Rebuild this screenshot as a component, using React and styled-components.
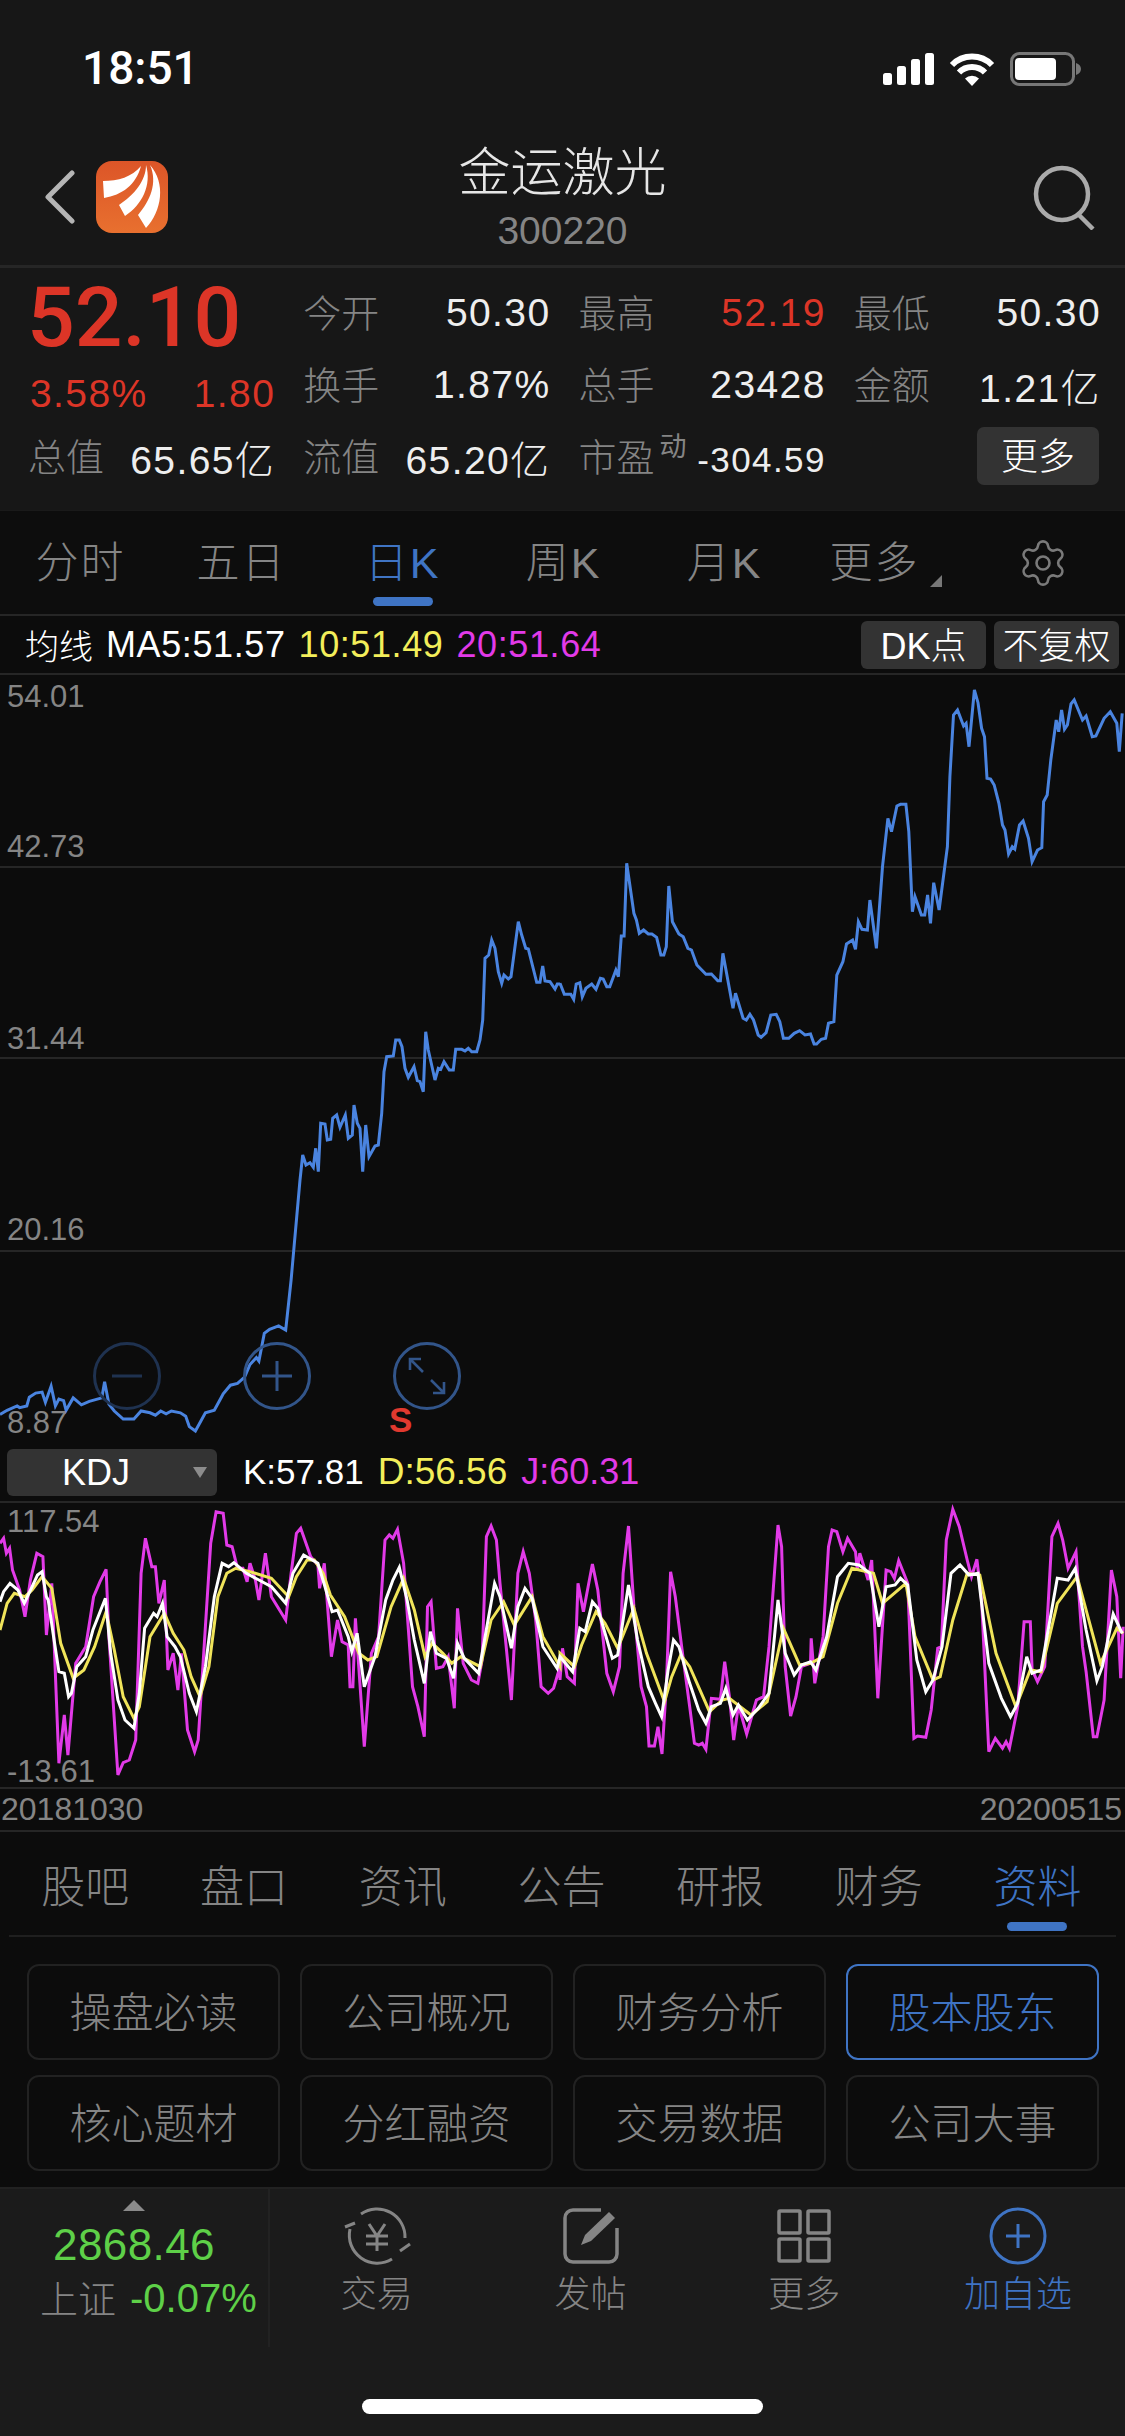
import React from 'react';
import styled, { createGlobalStyle } from 'styled-components';
import { Settings } from 'lucide-react';

const GlobalStyle = createGlobalStyle`
  html, body { margin: 0; padding: 0; background: #0c0c0c; }
  * { box-sizing: border-box; }
`;

const SANS = `"Liberation Sans", "Noto Sans CJK SC", sans-serif`;
const BLUE = '#3f74c4';
const RED = '#dc3527';
const GREY = '#858585';
const LINE = '#262626';

const Page = styled.div`
  width: 1125px;
  height: 2436px;
  overflow: hidden;
  background: #0c0c0c;
  font-family: ${SANS};
  color: #eee;
`;

/* ---- header ---- */
const Header = styled.header`
  height: 268px;
  background: #171717;
  border-bottom: 3px solid ${LINE};
`;
const StatusBar = styled.div`
  height: 138px;
  padding: 0 43px 0 82px;
  display: flex;
  align-items: center;
  justify-content: space-between;
`;
const Clock = styled.div`
  font-family: Roboto, sans-serif;
  font-weight: 500;
  font-size: 46px;
  margin-top: -2px;
  color: #fff;
`;
const StatusIcons = styled.div`
  display: flex;
  align-items: center;
  gap: 15px;
`;
const Nav = styled.div`
  display: grid;
  grid-template-columns: 1fr auto 1fr;
`;
const NavLeft = styled.div`
  height: 72px;
  margin-top: 23px;
  padding-left: 45px;
  display: flex;
  align-items: center;
  gap: 21px;
`;
const NavRight = styled.div`
  height: 72px;
  margin-top: 23px;
  padding-right: 27px;
  display: flex;
  align-items: center;
  justify-content: flex-end;
`;
const TitleBlock = styled.div`
  text-align: center;
`;
const Title = styled.div`
  font-size: 52px;
  line-height: 70px;
  font-weight: 300;
  color: #e6e6e6;
`;
const Code = styled.div`
  font-size: 39px;
  line-height: 46px;
  color: ${GREY};
`;

/* ---- quote ---- */
const Quote = styled.section`
  height: 242px;
  background: #171717;
  padding: 9px 24px 0 30px;
  display: grid;
  grid-template-columns: repeat(4, 1fr);
  grid-auto-rows: 72px;
  column-gap: 30px;
`;
const Price = styled.div`
  font-family: Roboto, sans-serif;
  font-weight: 500;
  font-size: 84px;
  line-height: 72px;
  padding-top: 5px;
  margin-left: -3px;
  color: ${RED};
  white-space: nowrap;
`;
const Stat = styled.div`
  display: flex;
  align-items: center;
  justify-content: space-between;
  white-space: nowrap;
  padding-top: ${(p) => p.$drop || 0}px;
`;
const StatLabel = styled.span`
  font-size: 38px;
  margin: -6px 0 0 -2px;
  font-weight: 300;
  color: ${GREY};
`;
const StatValue = styled.span`
  font-size: ${(p) => p.$size || 39}px;
  font-weight: 300;
  letter-spacing: 1.4px;
  padding-top: ${(p) => p.$drop || 0}px;
  color: ${(p) => p.$color || '#eee'};
`;
const Sup = styled.span`
  font-size: 27px;
  color: ${GREY};
  margin-left: 5px;
  align-self: flex-start;
  margin-top: -8px;
`;
const LabelGroup = styled.span`
  display: flex;
  align-items: center;
`;
const MoreButton = styled.button`
  justify-self: end;
  align-self: center;
  width: 122px;
  height: 58px;
  margin: -2px 2px 0 0;
  border: 0;
  border-radius: 7px;
  background: #333;
  color: #fff;
  font-family: inherit;
  font-size: 37px;
  font-weight: 300;
  padding: 0 0 5px;
`;

/* ---- period tabs ---- */
const PeriodBar = styled.nav`
  height: 104px;
  background: #0d0d0d;
  border-top: 1px solid #1a1a1a;
  display: grid;
  grid-template-columns: repeat(6, 161px) 1fr;
`;
const PeriodTab = styled.div`
  position: relative;
  display: flex;
  align-items: center;
  justify-content: center;
  padding-bottom: 8px;
  font-size: 43px;
  font-weight: 300;
  letter-spacing: 2px;
  color: ${(p) => (p.$active ? BLUE : GREY)};
  &::after {
    content: '';
    display: ${(p) => (p.$active ? 'block' : 'none')};
    position: absolute;
    left: 50%;
    bottom: 8px;
    width: 60px;
    height: 9px;
    margin-left: -30px;
    border-radius: 5px;
    background: ${BLUE};
  }
`;
const Corner = styled.span`
  align-self: flex-end;
  margin: 0 0 19px 10px;
  width: 0;
  height: 0;
  border-left: 12px solid transparent;
  border-bottom: 12px solid #777;
`;
const GearCell = styled.div`
  display: flex;
  align-items: center;
  padding-left: 51px;
  color: #7a7a7a;
`;

/* ---- indicator rows ---- */
const LegendRow = styled.div`
  height: 61px;
  border-top: 2px solid ${LINE};
  border-bottom: 2px solid ${LINE};
  padding: 0 6px 0 25px;
  display: flex;
  align-items: center;
  gap: 13px;
  white-space: nowrap;
`;
const LegendText = styled.span`
  font-size: ${(p) => p.$size || 36}px;
  letter-spacing: ${(p) => (p.$tight ? 0 : 0.6)}px;
  font-weight: 300;
  color: ${(p) => p.$color || '#fff'};
`;
const LegendButtons = styled.div`
  margin-left: auto;
  display: flex;
  gap: 8px;
`;
const LegendButton = styled.div`
  width: 125px;
  height: 48px;
  padding-bottom: 3px;
  border-radius: 6px;
  background: #333;
  display: flex;
  align-items: center;
  justify-content: center;
  font-size: 36px;
  font-weight: 300;
  color: #fff;
`;

/* ---- charts ---- */
const ChartBox = styled.div`
  position: relative;
  height: ${(p) => p.$height}px;
  svg.plot {
    display: block;
    width: 1125px;
    height: ${(p) => p.$height}px;
  }
`;
const AxisLabel = styled.span`
  position: absolute;
  left: 7px;
  top: ${(p) => p.$top}px;
  font-size: 31px;
  line-height: 34px;
  color: ${GREY};
`;
const ZoomControls = styled.div`
  position: absolute;
  left: 93px;
  top: 667px;
  display: flex;
  gap: 82px;
`;
const ZoomButton = styled.div`
  width: 68px;
  height: 68px;
  border-radius: 50%;
  border: 3px solid ${(p) => (p.$dim ? '#1f3250' : '#32558a')};
  display: flex;
  align-items: center;
  justify-content: center;
`;
const SellMark = styled.span`
  position: absolute;
  left: 389px;
  top: 726px;
  font-weight: 700;
  font-size: 35px;
  line-height: 38px;
  color: #e0392f;
`;
const KdjRow = styled(LegendRow)`
  height: 60px;
  border-top: 0;
  padding: 0 0 0 7px;
  gap: 14px;
`;
const KdjSelect = styled.div`
  position: relative;
  width: 210px;
  height: 47px;
  margin-right: 12px;
  border-radius: 6px;
  background: #333;
  padding-left: 55px;
  font-size: 36px;
  line-height: 47px;
  color: #fff;
  &::after {
    content: '';
    position: absolute;
    right: 10px;
    top: 18px;
    border-left: 7px solid transparent;
    border-right: 7px solid transparent;
    border-top: 11px solid #8c8c8c;
  }
`;
const DateRow = styled.div`
  height: 45px;
  padding: 0 3px 0 1px;
  border-top: 2px solid ${LINE};
  border-bottom: 2px solid ${LINE};
  display: flex;
  align-items: center;
  justify-content: space-between;
  font-size: 32px;
  color: ${GREY};
`;

/* ---- section tabs + cards ---- */
const SectionBar = styled.nav`
  height: 105px;
  margin: 0 9px;
  border-bottom: 2px solid #1f1f1f;
`;
const SectionTabs = styled.div`
  height: 100%;
  margin: 0 0 0 -3px;
  display: grid;
  grid-template-columns: repeat(7, 158.7px);
`;
const SectionTab = styled(PeriodTab)`
  padding-bottom: 0;
  font-size: 44px;
  letter-spacing: 0;
  &::after {
    bottom: 4px;
  }
`;
const Cards = styled.div`
  padding: 27px 27px 0;
  display: grid;
  grid-template-columns: repeat(4, 253px);
  grid-auto-rows: 96px;
  column-gap: 20px;
  row-gap: 15px;
`;
const Card = styled.div`
  border: 2px solid ${(p) => (p.$active ? BLUE : '#222')};
  border-radius: 12px;
  padding-bottom: 5px;
  display: flex;
  align-items: center;
  justify-content: center;
  font-size: 42px;
  font-weight: 300;
  color: ${(p) => (p.$active ? BLUE : GREY)};
`;

/* ---- footer ---- */
const Footer = styled.footer`
  margin-top: 16px;
  height: 249px;
  background: #1b1b1b;
  border-top: 2px solid #222;
`;
const FooterMain = styled.div`
  height: 158px;
  display: flex;
`;
const Market = styled.div`
  width: 270px;
  padding-top: 11px;
  border-right: 2px solid #222;
  display: flex;
  flex-direction: column;
  align-items: center;
`;
const MarketArrow = styled.span`
  border-left: 11px solid transparent;
  border-right: 11px solid transparent;
  border-bottom: 11px solid #8a8a8a;
  margin-bottom: 9px;
`;
const MarketValue = styled.div`
  font-size: 44px;
  line-height: 50px;
  color: #5ed048;
  letter-spacing: 0.4px;
`;
const MarketLine = styled.div`
  align-self: flex-start;
  display: flex;
  align-items: center;
  gap: 14px;
  height: 50px;
  margin: 3px 0 0 40px;
  white-space: nowrap;
`;
const MarketName = styled.span`
  font-size: 38px;
  margin-top: -3px;
  font-weight: 300;
  color: ${GREY};
`;
const MarketChange = styled.span`
  font-size: 40px;
  color: #5ed048;
`;
const Actions = styled.div`
  flex: 1;
  display: grid;
  grid-template-columns: repeat(4, 1fr);
`;
const Action = styled.div`
  padding-top: 14px;
  display: flex;
  flex-direction: column;
  align-items: center;
  color: ${(p) => (p.$active ? BLUE : GREY)};
`;
const ActionIcon = styled.div`
  height: 66px;
  display: flex;
  align-items: center;
  justify-content: center;
`;
const ActionLabel = styled.div`
  font-size: 36px;
  line-height: 50px;
  font-weight: 300;
  margin-top: 1px;
`;
const HomeBar = styled.div`
  width: 401px;
  height: 15px;
  margin: 52px auto 0;
  border-radius: 8px;
  background: #fff;
`;

/* ---- chart data, traced from the picture in crop coordinates ---- */
const crop = (pts, x0, sx, y0, sy) => {
  const out = [];
  for (let i = 0; i < pts.length; i += 2) {
    out.push(`${(x0 + pts[i] / sx).toFixed(1)},${(y0 + pts[i + 1] / sy).toFixed(1)}`);
  }
  return out.join(' ');
};

const priceA = [0,390,20,378,48,365,55,370,75,365,82,340,100,328,118,325,127,355,143,308,155,365,165,345,178,350,185,378,205,342,228,362,250,352,285,342,293,295,305,360,320,380,345,403,375,403,395,380,420,385,435,392,450,380,465,388,480,380,505,385,520,395,530,425,547,438,575,385,600,378,620,340,625,330,645,305,665,300,685,282,700,245,718,225,725,235,740,155,755,143,780,133,800,145,815,0];
const priceB = [240,900,248,825,258,855,270,848,280,862,287,805,295,875,302,730,315,732,322,780,332,778,338,715,350,705,360,742,376,705,385,775,397,765,402,675,412,730,420,745,428,875,437,735,447,830,465,798,475,795,485,700,492,575,500,530,520,528,527,480,538,480,546,500,555,565,565,592,582,560,592,602,600,605,610,635,617,455,625,510,645,600,655,565,662,568,672,545,688,570,700,570,707,508,725,508,735,513,745,505,755,515,770,515,780,480,788,420,795,235,806,225,815,180,825,205,835,275,845,310,852,285,865,297,873,290,895,125,905,165,917,205,925,207,950,307,960,307,968,258,975,303,990,305,1005,327,1012,312,1020,312];
const priceC = [0,970,12,1003,30,1003,38,1018,45,972,55,968,62,1010,72,985,88,972,100,988,112,955,120,957,130,980,138,980,155,930,162,950,170,828,178,828,185,610,205,760,212,780,220,820,232,810,245,822,255,822,268,832,280,885,288,885,295,860,302,678,312,785,330,822,342,830,355,865,365,870,380,915,405,943,420,942,438,962,445,962,452,880,480,1045,487,1000,508,1075,517,1080,527,1063,537,1080,550,1125,558,1132,572,1118,585,1065,600,1063,610,1085,620,1135,635,1135,650,1120,665,1112,680,1125,695,1122,705,1152,712,1152,725,1138,737,1135,745,1090,760,1085,768,945,785,905,795,852,812,840,820,868,828,785,838,808,853,810,860,720,878,865,895,620,910,475,920,515,935,438,945,433,960,433,968,515,978,755,985,710,1003,765,1012,765,1020,705,1028,790,1037,668,1052,750,1075,560,1082,350,1092,165,1103,150,1120,198,1127,190,1135,260,1150,90,1160,128,1170,205,1178,230,1185,355,1195,357,1205,375,1218,430,1228,495,1235,510,1245,582,1255,560,1262,567,1275,495,1285,483,1300,535,1310,605,1325,570,1337,563,1342,425,1352,405,1362,300,1377,180,1384,215,1392,150,1400,208,1408,195,1418,132,1427,120,1450,180,1460,168,1477,230,1487,228,1510,175,1527,155,1545,190,1552,275,1560,160];
const pricePath = [crop(priceA, 0, 2.8, 1280, 2.9), crop(priceB, 220, 3, 880, 3), crop(priceC, 560, 2.775, 660, 3)].join(' ');

const jLeft = [0,310,10,295,18,340,27,325,35,390,55,450,70,530,85,420,103,340,120,350,130,585,145,430,165,970,180,825,190,945,212,670,240,620,262,470,280,425,297,388,305,590,330,1005,345,968,362,960,380,900,395,400,407,295,425,380,435,380,445,490,460,420,470,690,485,640,498,750,508,640,525,870,545,935,555,900,575,560,590,310,605,215,625,220,635,315,650,320,665,385,680,385,692,425,700,370,715,420,725,480,743,340,760,470,800,540,815,400,830,280,842,265,870,350,890,375,895,445,908,370,928,650,945,540,958,605,975,615,980,740,988,740,995,535,1020,920,1040,640,1060,590,1078,300,1090,285,1100,295,1113,268,1130,370,1155,740,1170,800,1188,890,1197,500,1207,485,1222,685,1240,680,1255,650,1272,805,1281,505,1297,670,1320,720,1338,730,1350,660,1362,290,1375,258,1390,300,1400,430,1432,780,1450,400,1465,335,1482,400,1500,540,1515,740,1535,760,1550,745,1568,680];
const jRight = [0,720,7,625,20,710,40,730,50,430,65,515,90,372,105,450,130,700,148,755,165,680,175,400,190,258,205,500,225,740,240,800,247,918,262,918,272,860,283,942,295,740,307,395,320,470,340,640,360,800,373,910,385,915,395,910,405,928,420,775,445,778,457,665,470,770,482,900,495,795,518,882,545,780,565,770,580,620,605,255,615,320,625,680,640,828,655,770,670,680,695,670,697,595,707,730,730,590,745,320,755,270,768,275,785,335,798,295,820,335,825,390,832,340,855,420,865,360,882,775,905,390,918,395,928,415,940,362,965,430,982,895,992,888,1015,892,1030,810,1048,625,1058,620,1072,300,1090,208,1108,260,1130,360,1142,410,1157,358,1170,480,1190,935,1208,895,1228,925,1238,905,1247,925,1270,800,1288,545,1305,545,1310,690,1325,725,1345,680,1365,290,1382,250,1395,300,1410,385,1432,335,1450,620,1460,695,1480,890,1490,890,1510,780,1530,390,1545,470,1556,715,1563,560];
const kLeft = [0,485,10,455,28,430,50,450,68,490,90,440,105,405,118,395,130,470,135,480,150,590,165,695,180,700,192,770,200,760,215,680,240,650,260,570,295,475,310,640,330,780,350,840,375,865,390,760,405,565,430,520,440,530,455,490,468,590,490,620,505,650,530,760,550,815,575,680,600,470,622,370,640,380,655,368,690,400,725,420,760,440,800,490,820,400,850,345,890,370,910,440,930,515,945,510,975,590,985,635,1000,580,1020,740,1050,650,1080,480,1100,420,1118,382,1140,480,1160,600,1188,730,1205,575,1222,640,1250,655,1270,715,1281,610,1300,655,1340,700,1360,580,1385,430,1400,470,1432,625,1450,500,1470,445,1490,475,1520,620,1560,685];
const kRight = [0,650,35,695,55,565,70,575,90,485,105,505,145,655,160,645,190,435,215,600,245,740,265,790,282,830,300,690,315,600,330,620,360,730,385,810,405,850,420,800,445,790,460,745,480,825,495,795,520,840,550,805,580,760,605,480,625,640,650,705,670,675,695,665,710,690,740,590,770,410,800,370,830,375,860,400,885,560,905,440,930,435,945,415,965,435,990,660,1015,755,1035,720,1060,620,1085,400,1110,375,1135,405,1160,400,1190,670,1225,775,1250,830,1270,790,1295,650,1310,700,1335,690,1380,415,1410,420,1430,385,1460,570,1490,722,1505,680,1535,522,1560,580];
const dLeft = [0,570,20,490,40,460,70,470,90,450,118,410,145,445,170,610,205,715,235,690,265,620,297,515,320,630,345,770,375,835,390,800,420,590,460,520,485,580,515,630,535,710,560,770,585,680,610,470,635,400,660,385,700,395,760,415,808,470,830,410,860,360,880,360,905,400,925,465,965,530,1005,640,1030,660,1055,650,1095,500,1130,415,1160,510,1190,650,1210,610,1240,640,1265,670,1290,650,1345,680,1375,540,1410,485,1440,555,1490,470,1520,590,1568,680];
const dRight = [0,640,40,680,60,615,100,515,125,550,160,625,205,505,240,640,290,785,310,710,335,645,360,680,415,815,450,780,470,775,530,825,575,785,620,565,665,675,695,670,730,650,770,490,810,385,870,400,895,490,960,430,985,590,1035,720,1055,710,1090,540,1130,400,1165,405,1210,640,1265,800,1305,690,1335,695,1380,490,1435,410,1500,670,1545,565,1563,580];
const kdj = (left, right) => [crop(left, 0, 2.8, 1440, 3), crop(right, 560, 2.775, 1440, 3)].join(' ');

const PERIODS = ['分时', '五日', '日K', '周K', '月K'];
const SECTIONS = ['股吧', '盘口', '资讯', '公告', '研报', '财务', '资料'];
const CARDS = ['操盘必读', '公司概况', '财务分析', '股本股东', '核心题材', '分红融资', '交易数据', '公司大事'];

function StatusGlyphs() {
  return (
    <StatusIcons>
      <svg width="51" height="32" viewBox="0 0 51 32" fill="#fff">
        <rect x="0" y="20" width="9" height="12" rx="2.5" />
        <rect x="14" y="13" width="9" height="19" rx="2.5" />
        <rect x="28" y="6" width="9" height="26" rx="2.5" />
        <rect x="42" y="0" width="9" height="32" rx="2.5" />
      </svg>
      <svg width="46" height="33" viewBox="0 0 46 33" fill="none" stroke="#fff" strokeWidth="6">
        <path d="M3 12A28 28 0 0 1 43 12" />
        <path d="M10 19.5A18 18 0 0 1 36 19.5" />
        <path d="M23 33L16 25.5A10 10 0 0 1 30 25.5Z" fill="#fff" stroke="none" />
      </svg>
      <svg width="72" height="34" viewBox="0 0 72 34" fill="none">
        <rect x="1.5" y="1.5" width="62" height="31" rx="8" stroke="#777" strokeWidth="3" />
        <rect x="5" y="6" width="41" height="22" rx="4" fill="#fff" />
        <path d="M66 11c3 1 5 3 5 6s-2 5-5 6z" fill="#777" />
      </svg>
    </StatusIcons>
  );
}

function Logo() {
  return (
    <svg width="72" height="72" viewBox="0 0 72 72">
      <defs>
        <linearGradient id="logoFill" x1="0" y1="0" x2="0" y2="1">
          <stop offset="0" stopColor="#dc5528" />
          <stop offset="1" stopColor="#e8702f" />
        </linearGradient>
      </defs>
      <rect width="72" height="72" rx="16" fill="url(#logoFill)" />
      <path d="M45 5C36 16 22 20 7 20L8 37C26 34 40 24 45 5Z" fill="#fff" />
      <path d="M50 4C50 20 38 34 23 44L29 55C46 44 56 24 50 4Z" fill="#fff" />
      <path d="M54 4C62 22 54 40 42 54L50 67C66 50 70 22 54 4Z" fill="#fff" />
    </svg>
  );
}

function TradeIcon() {
  return (
    <svg width="68" height="66" viewBox="-3 -2 68 66" fill="none" stroke="currentColor" strokeWidth="3">
      <path d="M15 9A28 28 0 0 1 59 33" />
      <path d="M54 46L64 39" />
      <path d="M46 54A28 28 0 0 1 4 24" />
      <path d="M-1 22L9 18" />
      <path d="M23 19L31 31L39 19M20 31H42M20 39H42M31 31V46" />
    </svg>
  );
}

function PostIcon() {
  return (
    <svg width="56" height="56" viewBox="0 0 56 56" fill="none" stroke="currentColor" strokeWidth="3.5">
      <path d="M38 2H10a8 8 0 0 0-8 8V46a8 8 0 0 0 8 8H46a8 8 0 0 0 8-8V20" />
      <path d="M18 37L22 27L46 4L52 10L28 33Z" fill="currentColor" stroke="none" />
    </svg>
  );
}

function MoreIcon() {
  return (
    <svg width="54" height="54" viewBox="0 0 54 54" fill="none" stroke="currentColor" strokeWidth="3.5">
      <rect x="2" y="2" width="21" height="22" rx="1" />
      <rect x="31" y="2" width="21" height="22" rx="1" />
      <rect x="2" y="30" width="21" height="22" rx="1" />
      <rect x="31" y="30" width="21" height="22" rx="1" />
    </svg>
  );
}

function AddIcon() {
  return (
    <svg width="58" height="58" viewBox="0 0 58 58" fill="none" stroke="currentColor" strokeWidth="3">
      <circle cx="29" cy="29" r="27" />
      <path d="M17 29H41M29 17V41" />
    </svg>
  );
}

export default function App() {
  return (
    <Page>
      <GlobalStyle />
      <Header>
        <StatusBar>
          <Clock>18:51</Clock>
          <StatusGlyphs />
        </StatusBar>
        <Nav>
          <NavLeft>
            <svg width="30" height="54" viewBox="0 0 30 54" fill="none" stroke="#b5b5b5" strokeWidth="5" strokeLinecap="round" strokeLinejoin="round">
              <path d="M27 3L3 27L27 51" />
            </svg>
            <Logo />
          </NavLeft>
          <TitleBlock>
            <Title>金运激光</Title>
            <Code>300220</Code>
          </TitleBlock>
          <NavRight>
            <svg width="66" height="66" viewBox="0 0 66 66" fill="none" stroke="#aaa" strokeWidth="4.5">
              <circle cx="30" cy="30" r="26" />
              <path d="M46 50L61 65" />
            </svg>
          </NavRight>
        </Nav>
      </Header>

      <Quote>
        <Price>52.10</Price>
        <Stat><StatLabel>今开</StatLabel><StatValue>50.30</StatValue></Stat>
        <Stat><StatLabel>最高</StatLabel><StatValue $color={RED}>52.19</StatValue></Stat>
        <Stat><StatLabel>最低</StatLabel><StatValue>50.30</StatValue></Stat>

        <Stat $drop={18}><StatValue $color={RED}>3.58%</StatValue><StatValue $color={RED}>1.80</StatValue></Stat>
        <Stat><StatLabel>换手</StatLabel><StatValue>1.87%</StatValue></Stat>
        <Stat><StatLabel>总手</StatLabel><StatValue>23428</StatValue></Stat>
        <Stat><StatLabel>金额</StatLabel><StatValue>1.21亿</StatValue></Stat>

        <Stat><StatLabel>总值</StatLabel><StatValue>65.65亿</StatValue></Stat>
        <Stat><StatLabel>流值</StatLabel><StatValue>65.20亿</StatValue></Stat>
        <Stat>
          <LabelGroup><StatLabel>市盈</StatLabel><Sup>动</Sup></LabelGroup>
          <StatValue $size={35} $drop={6}>-304.59</StatValue>
        </Stat>
        <MoreButton>更多</MoreButton>
      </Quote>

      <PeriodBar>
        {PERIODS.map((name) => (
          <PeriodTab key={name} $active={name === '日K'}>{name}</PeriodTab>
        ))}
        <PeriodTab>更多<Corner /></PeriodTab>
        <GearCell><Settings size={52} strokeWidth={1.2} /></GearCell>
      </PeriodBar>

      <LegendRow>
        <LegendText $size={34} $tight>均线</LegendText>
        <LegendText>MA5:51.57</LegendText>
        <LegendText $color="#f3ee5a">10:51.49</LegendText>
        <LegendText $color="#e23ae8">20:51.64</LegendText>
        <LegendButtons>
          <LegendButton>DK点</LegendButton>
          <LegendButton>不复权</LegendButton>
        </LegendButtons>
      </LegendRow>

      <ChartBox $height={768}>
        <svg className="plot" viewBox="0 675 1125 768" fill="none">
          <path d="M0 867H1125M0 1058H1125M0 1251H1125" stroke={LINE} strokeWidth="2" />
          <polyline points={pricePath} stroke="#4a84e0" strokeWidth="3" strokeLinejoin="miter" />
        </svg>
        <AxisLabel $top={5}>54.01</AxisLabel>
        <AxisLabel $top={155}>42.73</AxisLabel>
        <AxisLabel $top={347}>31.44</AxisLabel>
        <AxisLabel $top={538}>20.16</AxisLabel>
        <AxisLabel $top={731}>8.87</AxisLabel>
        <ZoomControls>
          <ZoomButton $dim>
            <svg width="34" height="34" viewBox="0 0 34 34" stroke="#1f3250" strokeWidth="3"><path d="M2 17H32" /></svg>
          </ZoomButton>
          <ZoomButton>
            <svg width="34" height="34" viewBox="0 0 34 34" stroke="#32558a" strokeWidth="3"><path d="M2 17H32M17 2V32" /></svg>
          </ZoomButton>
          <ZoomButton>
            <svg width="42" height="42" viewBox="0 0 42 42" fill="none" stroke="#32558a" strokeWidth="2.6"><path d="M4 4L17 17M25 25L38 38M4 15V4H15M27 38H38V27" /></svg>
          </ZoomButton>
        </ZoomControls>
        <SellMark>S</SellMark>
      </ChartBox>

      <KdjRow>
        <KdjSelect>KDJ</KdjSelect>
        <LegendText $size={35} $tight>K:57.81</LegendText>
        <LegendText $size={37} $tight $color="#f3ee5a">D:56.56</LegendText>
        <LegendText $tight $color="#e23ae8">J:60.31</LegendText>
      </KdjRow>

      <ChartBox $height={284}>
        <svg className="plot" viewBox="0 1503 1125 284" fill="none" strokeWidth="3">
          <polyline points={kdj(jLeft, jRight)} stroke="#e23ae8" />
          <polyline points={kdj(dLeft, dRight)} stroke="#f0e45a" />
          <polyline points={kdj(kLeft, kRight)} stroke="#fff" />
        </svg>
        <AxisLabel $top={2}>117.54</AxisLabel>
        <AxisLabel $top={252}>-13.61</AxisLabel>
      </ChartBox>

      <DateRow>
        <span>20181030</span>
        <span>20200515</span>
      </DateRow>

      <SectionBar>
        <SectionTabs>
          {SECTIONS.map((name) => (
            <SectionTab key={name} $active={name === '资料'}>{name}</SectionTab>
          ))}
        </SectionTabs>
      </SectionBar>

      <Cards>
        {CARDS.map((name) => (
          <Card key={name} $active={name === '股本股东'}>{name}</Card>
        ))}
      </Cards>

      <Footer>
        <FooterMain>
          <Market>
            <MarketArrow />
            <MarketValue>2868.46</MarketValue>
            <MarketLine>
              <MarketName>上证</MarketName>
              <MarketChange>-0.07%</MarketChange>
            </MarketLine>
          </Market>
          <Actions>
            <Action><ActionIcon><TradeIcon /></ActionIcon><ActionLabel>交易</ActionLabel></Action>
            <Action><ActionIcon><PostIcon /></ActionIcon><ActionLabel>发帖</ActionLabel></Action>
            <Action><ActionIcon><MoreIcon /></ActionIcon><ActionLabel>更多</ActionLabel></Action>
            <Action $active><ActionIcon><AddIcon /></ActionIcon><ActionLabel>加自选</ActionLabel></Action>
          </Actions>
        </FooterMain>
        <HomeBar />
      </Footer>
    </Page>
  );
}
